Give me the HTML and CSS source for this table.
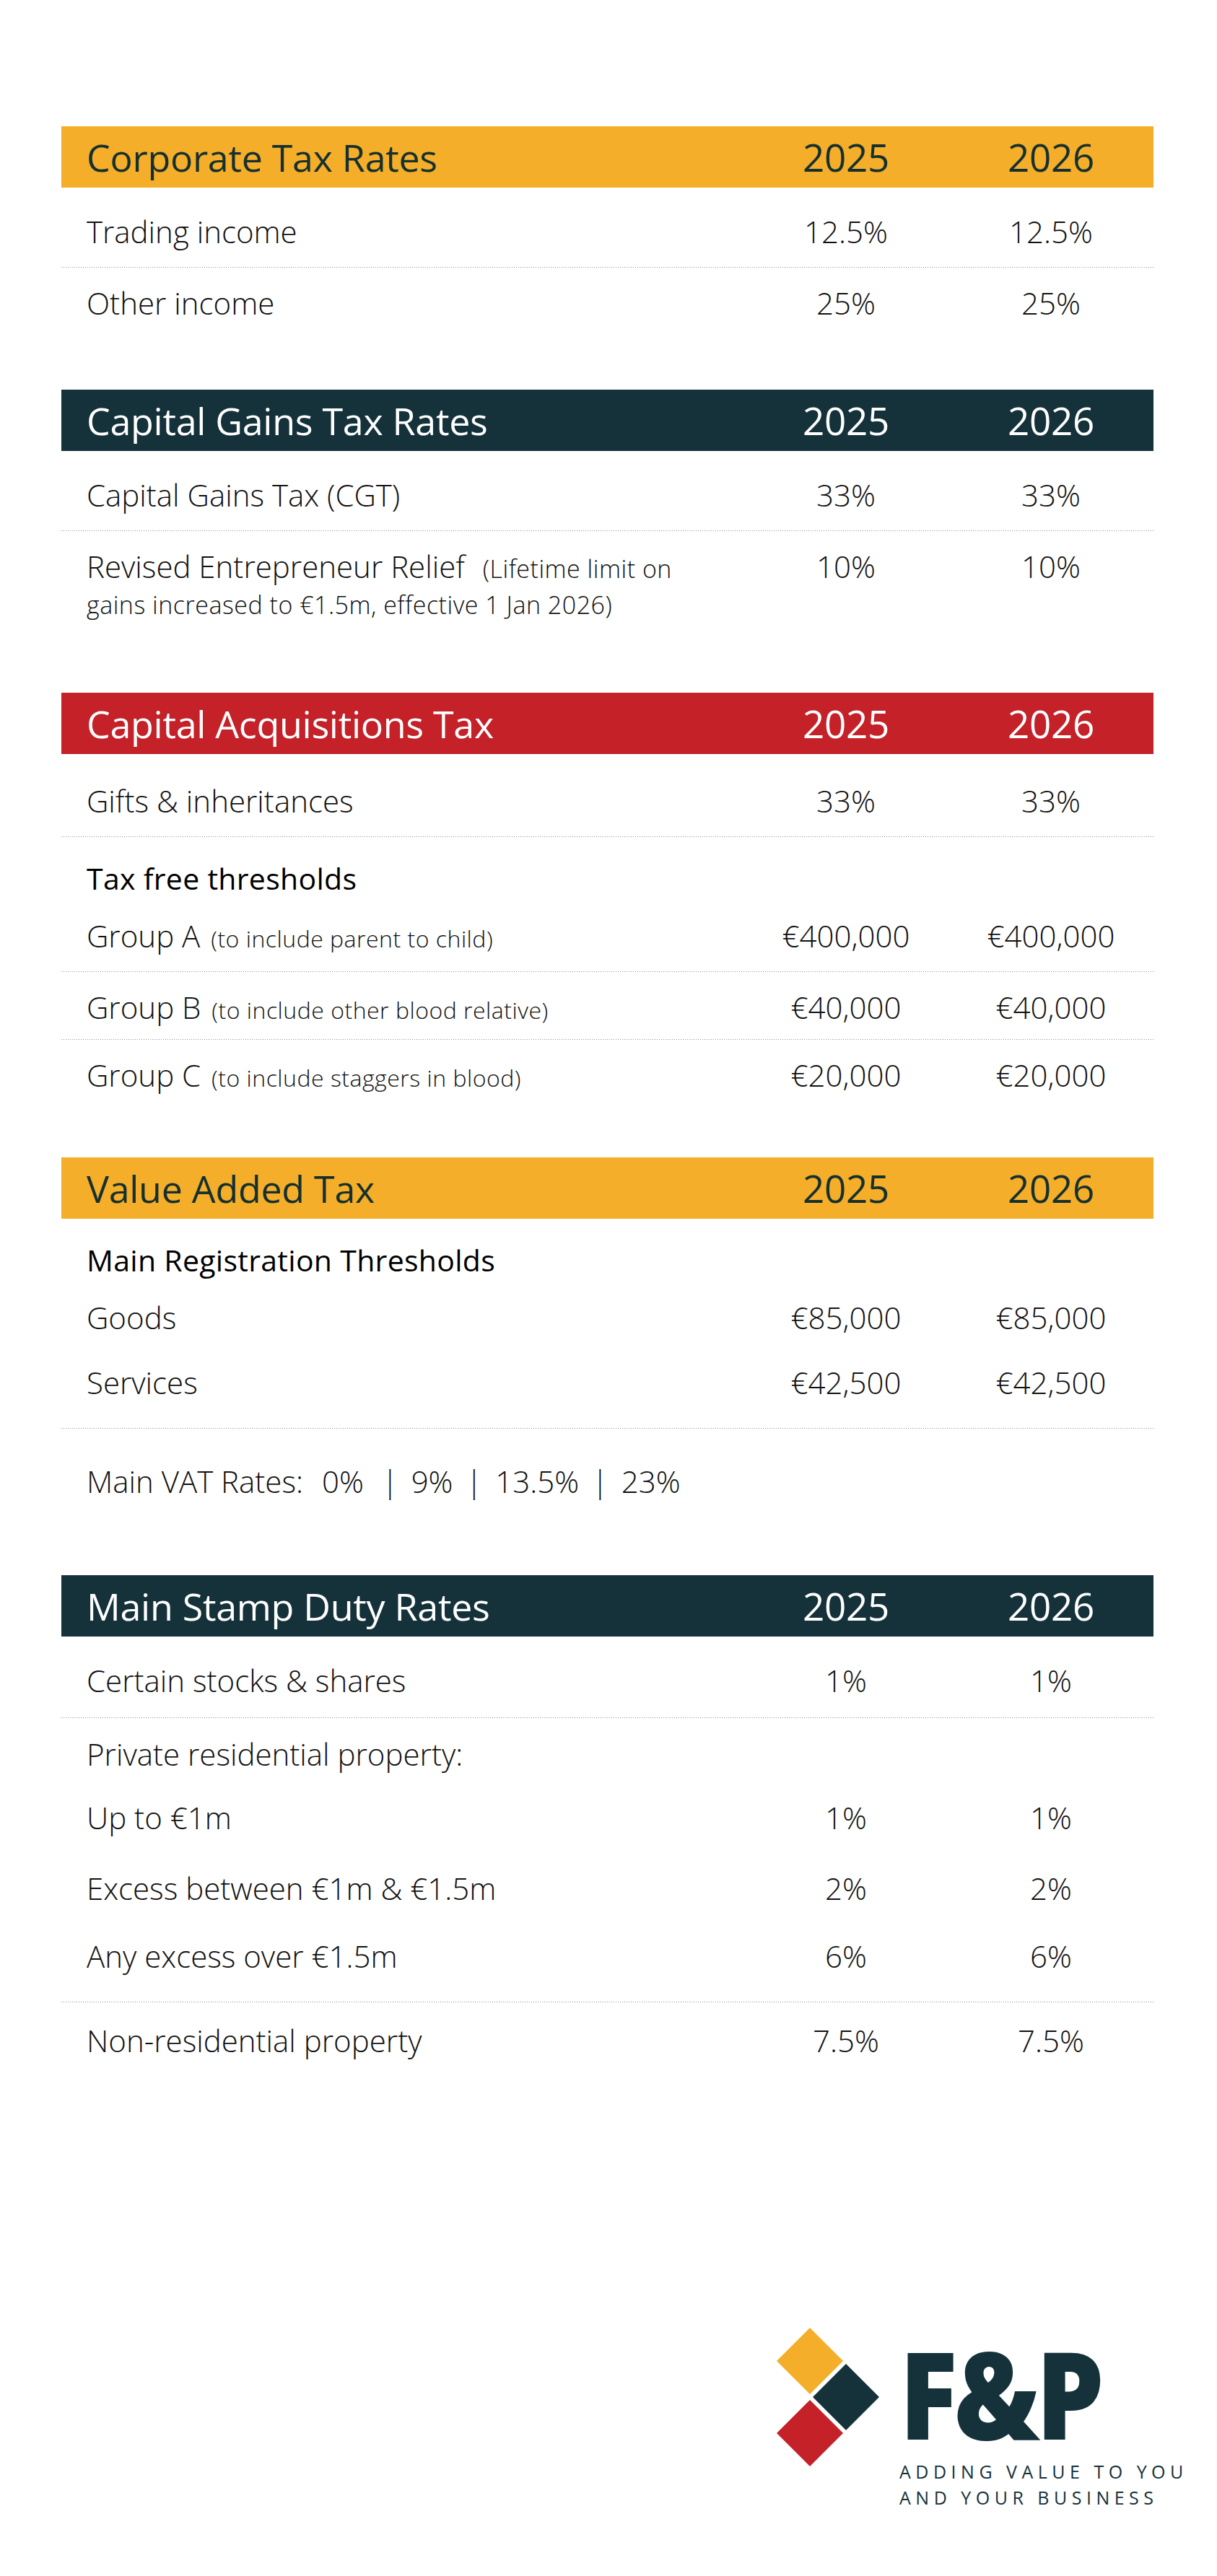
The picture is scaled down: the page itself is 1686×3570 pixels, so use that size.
FILE: index.html
```html
<!DOCTYPE html>
<html lang="en">
<head>
<meta charset="utf-8">
<title>Tax Rates 2025 / 2026</title>
<link rel="stylesheet" href="styles.css">
</head>
<body>
<main class="page">

  <section class="sec sec-1">
    <div class="bar bar-orange"><span>Corporate Tax Rates</span><span class="yr">2025</span><span class="yr">2026</span></div>
    <div class="body">
      <div class="row sep"><span>Trading income</span><span class="v">12.5%</span><span class="v">12.5%</span></div>
      <div class="row"><span>Other income</span><span class="v">25%</span><span class="v">25%</span></div>
    </div>
  </section>

  <section class="sec sec-2">
    <div class="bar bar-dark"><span>Capital Gains Tax Rates</span><span class="yr">2025</span><span class="yr">2026</span></div>
    <div class="body">
      <div class="row sep"><span>Capital Gains Tax (CGT)</span><span class="v">33%</span><span class="v">33%</span></div>
      <div class="row"><span>Revised Entrepreneur Relief <small class="note note-wide">(Lifetime limit on<br>gains increased to €1.5m, effective 1 Jan 2026)</small></span><span class="v">10%</span><span class="v">10%</span></div>
    </div>
  </section>

  <section class="sec sec-3">
    <div class="bar bar-red"><span>Capital Acquisitions Tax</span><span class="yr">2025</span><span class="yr">2026</span></div>
    <div class="body">
      <div class="row sep"><span>Gifts &amp; inheritances</span><span class="v">33%</span><span class="v">33%</span></div>
      <div class="row sub"><span>Tax free thresholds</span></div>
      <div class="row sep"><span>Group A <small class="note">(to include parent to child)</small></span><span class="v">€400,000</span><span class="v">€400,000</span></div>
      <div class="row pb20 sep"><span>Group B <small class="note">(to include other blood relative)</small></span><span class="v">€40,000</span><span class="v">€40,000</span></div>
      <div class="row"><span>Group C <small class="note">(to include staggers in blood)</small></span><span class="v">€20,000</span><span class="v">€20,000</span></div>
    </div>
  </section>

  <section class="sec sec-4">
    <div class="bar bar-orange"><span>Value Added Tax</span><span class="yr">2025</span><span class="yr">2026</span></div>
    <div class="body">
      <div class="row sub"><span>Main Registration Thresholds</span></div>
      <div class="row pb16"><span>Goods</span><span class="v">€85,000</span><span class="v">€85,000</span></div>
      <div class="row pb38 sep"><span>Services</span><span class="v">€42,500</span><span class="v">€42,500</span></div>
      <div class="row pt48"><span>Main VAT Rates:<span class="gap"></span>0%<span class="pipe pipe-first">|</span>9%<span class="pipe">|</span>13.5%<span class="pipe">|</span>23%</span></div>
    </div>
  </section>

  <section class="sec sec-5">
    <div class="bar bar-dark"><span>Main Stamp Duty Rates</span><span class="yr">2025</span><span class="yr">2026</span></div>
    <div class="body">
      <div class="row pb26 sep"><span>Certain stocks &amp; shares</span><span class="v">1%</span><span class="v">1%</span></div>
      <div class="row pt25 pb14"><span>Private residential property:</span></div>
      <div class="row"><span>Up to €1m</span><span class="v">1%</span><span class="v">1%</span></div>
      <div class="row pb20"><span>Excess between €1m &amp; €1.5m</span><span class="v">2%</span><span class="v">2%</span></div>
      <div class="row pb38 sep"><span>Any excess over €1.5m</span><span class="v">6%</span><span class="v">6%</span></div>
      <div class="row pt28"><span>Non-residential property</span><span class="v">7.5%</span><span class="v">7.5%</span></div>
    </div>
  </section>

  <footer class="brand">
    <svg class="marks" width="145" height="195" viewBox="0 0 145 195" aria-hidden="true">
      <polygon points="47,1 93,47 47,93 1,47" fill="#F4AE29"/>
      <polygon points="97,51 143,97 97,143 51,97" fill="#15313A"/>
      <polygon points="47,101 93,147 47,193 1,147" fill="#C42128"/>
    </svg>
    <div class="wordmark">
      <div class="name">F&amp;P</div>
      <div class="tag">ADDING VALUE TO YOU<br>AND YOUR BUSINESS</div>
    </div>
  </footer>

</main>
</body>
</html>
```

FILE: styles.css
```css
* { box-sizing: border-box; }

html, body {
  margin: 0;
  padding: 0;
  background: #ffffff;
}

body {
  font-family: "Open Sans", "Liberation Sans", sans-serif;
  font-weight: 300;
  color: #111111;
}

.page {
  width: 1513px;
  margin-left: 85px;
  padding-top: 175px;
  padding-bottom: 80px;
}

.sec-2 { margin-top: 71px; }
.sec-3 { margin-top: 76px; }
.sec-4 { margin-top: 65px; }
.sec-5 { margin-top: 81px; }

.bar,
.row {
  display: grid;
  grid-template-columns: 1fr 284px 284px;
  padding-left: 35px;
}

.bar {
  height: 85px;
  align-items: center;
  font-weight: 500;
  font-size: 52px;
  line-height: 1;
  letter-spacing: -0.3px;
}

.bar .yr {
  text-align: center;
  font-size: 53px;
}

.bar-orange { background: #F4AE29; color: #16302F; }
.bar-dark { background: #15313A; color: #ffffff; }
.bar-red { background: #C42128; color: #ffffff; }

.body { padding-top: 12px; }
.sec-3 .body { padding-top: 16px; }
.sec-4 .body { padding-top: 0; }

.row {
  padding-top: 24px;
  padding-bottom: 24px;
  font-size: 42px;
  line-height: 50px;
  align-items: start;
}

.row .v { text-align: center; }

.row.sep {
  padding-bottom: 25px;
  background-image: linear-gradient(to right, #8f8f8f 1px, transparent 1px);
  background-size: 3px 1px;
  background-repeat: repeat-x;
  background-position: left bottom;
}

.row.sub {
  padding-top: 32px;
  padding-bottom: 6px;
  font-weight: 400;
  font-size: 41px;
  letter-spacing: 0.3px;
  color: #000000;
}

.row.pb14 { padding-bottom: 14px; }
.row.pb16 { padding-bottom: 16px; }
.row.pb20 { padding-bottom: 20px; }
.row.pb26 { padding-bottom: 27px; }
.row.pb38 { padding-bottom: 39px; }
.row.pt25 { padding-top: 25px; }
.row.pt28 { padding-top: 28px; }
.row.pt48 { padding-top: 48px; }

.note {
  font-size: 32px;
  line-height: 1;
  letter-spacing: 0.5px;
  margin-left: 4px;
}

.note-wide {
  font-size: 34px;
  margin-left: 14px;
}

.gap { display: inline-block; width: 26px; }

.pipe {
  display: inline-block;
  margin: 0 18px;
}

.pipe-first { margin-left: 25px; }

.brand {
  display: flex;
  align-items: flex-start;
  margin-top: 348px;
  padding-left: 990px;
  gap: 26px;
  color: #15313A;
}

.marks { display: block; flex: none; }

.wordmark { margin-top: 26px; }

.name {
  display: inline-block;
  font-weight: 800;
  font-size: 168px;
  line-height: 130px;
  letter-spacing: -6px;
  transform: scaleX(0.89);
  transform-origin: left center;
}

.tag {
  margin-top: 21px;
  font-weight: 400;
  font-size: 25px;
  line-height: 36px;
  letter-spacing: 6.5px;
  white-space: nowrap;
}
```
